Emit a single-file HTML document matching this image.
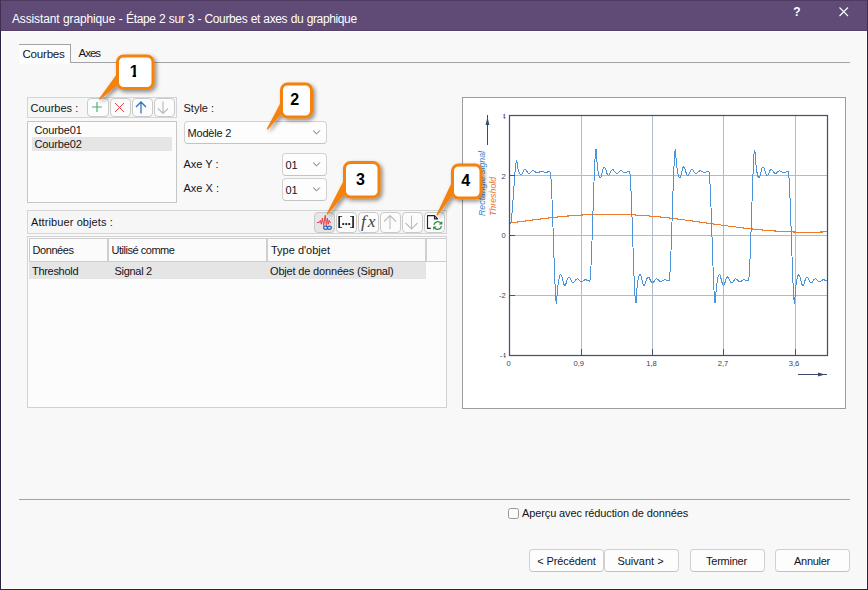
<!DOCTYPE html>
<html lang="fr">
<head>
<meta charset="utf-8">
<title>Assistant graphique</title>
<style>
html,body{margin:0;padding:0}
body{width:868px;height:590px;position:relative;overflow:hidden;background:#f8f8f8;font-family:"Liberation Sans",sans-serif;font-size:11px;color:#141420}
.a{position:absolute;box-sizing:border-box}
.t{position:absolute;white-space:nowrap;font-size:11px;line-height:14px}
.tb{border:1px solid #d5d5d5;background:#f6f6f6}
.btn{position:absolute;box-sizing:border-box;border:1px solid #cacaca;border-radius:4px;background:#fcfcfc}
.cb{position:absolute;box-sizing:border-box;border:1px solid #d2d2d2;border-bottom-color:#c4c4c4;border-radius:4px;background:#fdfdfd}
.pb{position:absolute;box-sizing:border-box;border:1px solid #d0d0d0;border-bottom-color:#c2c2c2;border-radius:4px;background:#fdfdfd;height:23px;top:549px;text-align:center;line-height:23px;font-size:11px}
svg{position:absolute;left:0;top:0;overflow:visible}
</style>
</head>
<body>
<!-- title bar -->
<div class="a" style="left:0;top:0;width:868px;height:31px;background:#604b76;border-bottom:1px solid #574069"></div>
<div class="t" style="left:12px;top:11px;font-size:12px;line-height:16px;color:#fff;letter-spacing:-0.37px;word-spacing:0.45px"><span style="letter-spacing:-0.14px">Assistant graphique -</span> Étape 2 sur 3 - Courbes et axes du graphique</div>
<div class="t" style="left:793.3px;top:4px;font-size:12px;line-height:16px;color:#fff;font-weight:bold">?</div>
<svg width="868" height="32"><path d="M839.5 7.5 L848 16 M848 7.5 L839.5 16" stroke="#fff" stroke-width="1.1" fill="none"/></svg>
<div class="a" style="left:0;top:0;width:868px;height:1px;background:#4d3b62"></div>
<!-- inner highlight -->
<div class="a" style="left:1px;top:31px;width:866px;height:558px;border:1px solid #fff"></div>
<!-- window borders -->
<div class="a" style="left:0;top:0;width:1px;height:31px;background:#3f3052"></div>
<div class="a" style="left:867px;top:0;width:1px;height:31px;background:#3f3052"></div>
<div class="a" style="left:0;top:31px;width:1px;height:559px;background:#2c2040"></div>
<div class="a" style="left:867px;top:31px;width:1px;height:559px;background:#2c2040"></div>
<div class="a" style="left:0;top:589px;width:868px;height:1px;background:#2c2040"></div>

<!-- tabs -->
<div class="a" style="left:70px;top:62px;width:780px;height:1px;background:#a3a3a3"></div>
<div class="a" style="left:19px;top:44px;width:51px;height:20px;background:#fdfdfd;border-top:1px solid #a3a3a3"></div>
<div class="a" style="left:70px;top:44px;width:1px;height:19px;background:#a3a3a3"></div>
<div class="t" style="left:22.5px;top:46px;font-size:11.6px;line-height:16px;letter-spacing:-0.25px">Courbes</div>
<div class="t" style="left:78.5px;top:45px;font-size:11.5px;line-height:16px;letter-spacing:-1.0px">Axes</div>

<!-- toolbar 1 -->
<div class="a tb" style="left:27px;top:97px;width:150px;height:21px"></div>
<div class="t" style="left:30.5px;top:101px">Courbes :</div>
<div class="btn" style="left:87px;top:98px;width:22px;height:19px"></div>
<div class="btn" style="left:110px;top:98px;width:21px;height:19px"></div>
<div class="btn" style="left:132px;top:98px;width:21px;height:19px"></div>
<div class="btn" style="left:154px;top:98px;width:21px;height:19px"></div>
<svg width="868" height="590">
 <path d="M92 107 H102 M97 102 V112" stroke="#4cae72" stroke-width="1.15" fill="none"/>
 <path d="M115 103 L124 112 M124 103 L115 112" stroke="#e5434b" stroke-width="1" fill="none"/>
 <path d="M141 113.5 V102 M136 107 L141 102 L146 107" stroke="#2a72c0" stroke-width="1.25" fill="none"/>
 <path d="M163 101.5 V113.5 M158 108.5 L163 113.5 L168 108.5" stroke="#bcbcbc" stroke-width="1.2" fill="none"/>
</svg>

<!-- listbox -->
<div class="a" style="left:27px;top:121px;width:150px;height:82px;border:1px solid #c6c6c6;background:#fcfcfc"></div>
<div class="a" style="left:32px;top:137px;width:140px;height:14px;background:#e5e5e5"></div>
<div class="t" style="left:34.5px;top:123px;letter-spacing:-0.15px">Courbe01</div>
<div class="t" style="left:34.5px;top:137px;letter-spacing:-0.15px">Courbe02</div>

<!-- style / axes -->
<div class="t" style="left:183.5px;top:101px">Style :</div>
<div class="cb" style="left:184px;top:121px;width:143px;height:23px"></div>
<div class="t" style="left:187.5px;top:126px;letter-spacing:-0.2px">Modèle 2</div>
<div class="t" style="left:183.5px;top:157px">Axe Y :</div>
<div class="cb" style="left:282px;top:153px;width:45px;height:23px"></div>
<div class="t" style="left:285.5px;top:158px">01</div>
<div class="t" style="left:183.5px;top:181px">Axe X :</div>
<div class="cb" style="left:282px;top:178px;width:45px;height:23px"></div>
<div class="t" style="left:285.5px;top:183px">01</div>
<svg width="868" height="590">
 <path d="M313.2 130.6 L316.5 133.9 L319.8 130.6" stroke="#666" stroke-width="1" fill="none"/>
 <path d="M313.2 162.6 L316.5 165.9 L319.8 162.6" stroke="#666" stroke-width="1" fill="none"/>
 <path d="M313.2 187.6 L316.5 190.9 L319.8 187.6" stroke="#666" stroke-width="1" fill="none"/>
</svg>

<!-- toolbar 2 -->
<div class="a tb" style="left:27px;top:210px;width:420px;height:24px"></div>
<div class="t" style="left:31px;top:215px;letter-spacing:0.1px">Attribuer objets :</div>
<div class="btn" style="left:314px;top:212px;width:21px;height:21px;background:#e6e6e6;border-color:#c9c9c9"></div>
<div class="btn" style="left:336px;top:212px;width:21px;height:21px"></div>
<div class="btn" style="left:358px;top:212px;width:21px;height:21px"></div>
<div class="btn" style="left:380px;top:212px;width:21px;height:21px"></div>
<div class="btn" style="left:402px;top:212px;width:21px;height:21px"></div>
<div class="btn" style="left:424px;top:212px;width:21px;height:21px"></div>
<div class="t" style="left:336.8px;top:213px;font-size:13px;line-height:16px;color:#111;transform:scaleX(1.45);transform-origin:0 0">[</div>
<div class="t" style="left:349.6px;top:213px;font-size:13px;line-height:16px;color:#111;transform:scaleX(1.45);transform-origin:0 0">]</div>
<div class="t" style="left:341.6px;top:213px;font-size:12px;line-height:16px;color:#111;font-weight:bold;letter-spacing:-0.33px">...</div>
<div class="t" style="left:361px;top:210.5px;font-family:'Liberation Serif',serif;font-style:italic;font-size:17.5px;line-height:20px;color:#444;letter-spacing:1.8px">fx</div>
<svg width="868" height="590">
 <!-- waveform -->
 <path d="M317 222.5 L319.2 222.5 L320.4 220.4 L321.3 224.2 L322.4 218 L323.7 225.6 L325.2 215.3 L326.4 225.6 L327.4 218 L328.3 224.2 L329.2 220.4 L330 222.5 L330.8 222.5" stroke="#e63e4a" stroke-width="1" fill="none" stroke-linejoin="round"/>
 <!-- chain link -->
 <ellipse cx="325.6" cy="227.7" rx="2.0" ry="1.6" stroke="#2b62b8" stroke-width="1.25" fill="none"/>
 <ellipse cx="329.4" cy="227.7" rx="2.0" ry="1.6" stroke="#2b62b8" stroke-width="1.25" fill="none"/>
 <!-- arrows disabled -->
 <path d="M390 229 V215.5 M384 221.5 L390 215.5 L396 221.5" stroke="#bdbdbd" stroke-width="1.1" fill="none"/>
 <path d="M411.5 215.5 V229 M405.5 223 L411.5 229 L417.5 223" stroke="#bdbdbd" stroke-width="1.1" fill="none"/>
 <!-- doc -->
 <path d="M430.8 228.4 H427.5 V215.6 H434.5 L437.6 218.9 H434.5 V215.6" stroke="#222" stroke-width="1.1" fill="none" stroke-linejoin="round"/>
 <path d="M433.9 224.8 A3.9 3.9 0 0 1 440.7 223" stroke="#2e8f49" stroke-width="1.3" fill="none"/>
 <path d="M441.5 226.2 A3.9 3.9 0 0 1 434.7 228" stroke="#2e8f49" stroke-width="1.3" fill="none"/>
 <path d="M442.3 221 V224.6 H438.7 Z" fill="#2e8f49"/>
 <path d="M433.1 230 V226.4 H436.7 Z" fill="#2e8f49"/>
</svg>

<!-- table -->
<div class="a" style="left:27px;top:236px;width:420px;height:172px;border:1px solid #d2d2d2;background:#fcfcfc"></div>
<div class="a" style="left:29px;top:238px;width:417px;height:24px;background:#fbfbfb;border:1px solid #cdcdcd;border-right:none"></div>
<div class="a" style="left:107px;top:239px;width:2px;height:22px;background:#cfcfcf"></div>
<div class="a" style="left:266px;top:239px;width:2px;height:22px;background:#cfcfcf"></div>
<div class="a" style="left:425px;top:239px;width:2px;height:22px;background:#cfcfcf"></div>
<div class="a" style="left:29px;top:262px;width:397px;height:17px;background:#e5e5e5"></div>
<div class="t" style="left:32.5px;top:243px;letter-spacing:-0.42px">Données</div>
<div class="t" style="left:111.5px;top:243px;letter-spacing:-0.47px">Utilisé comme</div>
<div class="t" style="left:271px;top:243px">Type d'objet</div>
<div class="t" style="left:32px;top:264px;letter-spacing:-0.3px">Threshold</div>
<div class="t" style="left:114.5px;top:264px;letter-spacing:-0.3px">Signal 2</div>
<div class="t" style="left:270px;top:264px;letter-spacing:-0.17px">Objet de données (Signal)</div>

<!-- preview -->
<div class="a" style="left:462px;top:97px;width:384px;height:312px;border:1px solid #9c9c9c;background:#fff"></div>
<svg width="868" height="590" font-family="Liberation Sans, sans-serif">
 <defs><clipPath id="pc"><rect x="509" y="115" width="319" height="241"/></clipPath><clipPath id="c4a"><rect x="503.2" y="110" width="6" height="12"/></clipPath><clipPath id="c4b"><rect x="503.6" y="349" width="6" height="12"/></clipPath></defs>
 <!-- grid -->
 <g stroke="#afbcd0" stroke-width="1" fill="none" shape-rendering="crispEdges">
  <path d="M581.5 116 V355 M652.5 116 V355 M723.5 116 V355 M795.5 116 V355"/>
  <path d="M510 175.5 H828 M510 235.5 H828 M510 295.5 H828"/>
 </g>
 <g clip-path="url(#pc)" fill="none" shape-rendering="crispEdges">
  <polyline points="509.5,223.2 512.5,222.8 515.5,222.3 518.5,221.9 521.5,221.5 524.5,221.1 527.5,220.7 530.5,220.3 533.5,219.9 536.5,219.5 539.5,219.1 542.5,218.7 545.5,218.3 548.5,218.0 551.5,217.7 554.5,217.3 557.5,217.0 560.5,216.7 563.5,216.4 566.5,216.1 569.5,215.9 572.5,215.6 575.5,215.4 578.5,215.2 581.5,215.0 584.5,214.9 587.5,214.7 590.5,214.6 593.5,214.5 596.5,214.4 599.5,214.3 602.5,214.2 605.5,214.2 608.5,214.2 611.5,214.2 614.5,214.2 617.5,214.3 620.5,214.4 623.5,214.4 626.5,214.6 629.5,214.7 632.5,214.8 635.5,215.0 638.5,215.2 641.5,215.4 644.5,215.6 647.5,215.8 650.5,216.1 653.5,216.4 656.5,216.6 659.5,216.9 662.5,217.3 665.5,217.6 668.5,217.9 671.5,218.3 674.5,218.6 677.5,219.0 680.5,219.4 683.5,219.8 686.5,220.2 689.5,220.6 692.5,221.0 695.5,221.4 698.5,221.8 701.5,222.3 704.5,222.7 707.5,223.1 710.5,223.5 713.5,224.0 716.5,224.4 719.5,224.8 722.5,225.2 725.5,225.6 728.5,226.1 731.5,226.5 734.5,226.8 737.5,227.2 740.5,227.6 743.5,228.0 746.5,228.3 749.5,228.7 752.5,229.0 755.5,229.3 758.5,229.6 761.5,229.9 764.5,230.2 767.5,230.5 770.5,230.7 773.5,230.9 776.5,231.1 779.5,231.3 782.5,231.5 785.5,231.7 788.5,231.8 791.5,231.9 794.5,232.0 797.5,232.1 800.5,232.1 803.5,232.2 806.5,232.2 809.5,232.2 812.5,232.2 815.5,232.1 818.5,232.1 821.5,232.0 824.5,231.9 827.5,231.7" stroke="#ee7a2c" stroke-width="1.1"/>
  <polyline points="509.5,224.1 510.0,224.1 510.5,223.9 511.0,222.1 511.5,218.4 512.0,213.4 512.5,207.2 513.0,200.4 513.5,193.1 514.0,185.8 514.5,178.9 515.0,172.6 515.5,167.3 516.0,163.3 516.5,161.1 517.0,162.5 517.5,166.3 518.0,168.9 518.5,170.8 519.0,172.2 519.5,173.3 520.0,174.1 520.5,174.6 521.0,174.7 521.5,174.5 522.0,173.8 522.5,173.0 523.0,172.0 523.5,171.0 524.0,170.2 524.5,169.7 525.0,169.5 525.5,169.7 526.0,170.2 526.5,170.8 527.0,171.6 527.5,172.4 528.0,173.0 528.5,173.5 529.0,173.6 529.5,173.6 530.0,173.3 530.5,172.8 531.0,172.3 531.5,171.7 532.0,171.2 532.5,170.9 533.0,170.7 533.5,170.7 534.0,170.9 534.5,171.2 535.0,171.5 535.5,171.9 536.0,172.3 536.5,172.5 537.0,172.7 537.5,172.7 538.0,172.6 538.5,172.4 539.0,172.2 539.5,172.0 540.0,171.7 540.5,171.5 541.0,171.4 541.5,171.4 542.0,171.4 542.5,171.5 543.0,171.6 543.5,171.8 544.0,172.0 544.5,172.1 545.0,172.2 545.5,172.2 546.0,172.2 546.5,172.2 547.0,172.1 547.5,172.0 548.0,171.9 548.5,171.8 549.0,171.7 549.5,171.7 550.0,171.7 550.5,173.1 551.0,178.6 551.5,187.5 552.0,199.1 552.5,212.6 553.0,227.4 553.5,242.6 554.0,257.6 554.5,271.6 555.0,283.9 555.5,293.9 556.0,300.7 556.5,303.7 557.0,296.5 557.5,289.6 558.0,284.9 558.5,281.4 559.0,278.8 559.5,276.8 560.0,275.3 560.5,274.6 561.0,274.8 561.5,275.7 562.0,277.2 562.5,279.2 563.0,281.3 563.5,283.2 564.0,284.6 564.5,285.4 565.0,285.4 565.5,284.8 566.0,283.6 566.5,282.0 567.0,280.4 567.5,278.9 568.0,277.7 568.5,277.1 569.0,276.9 569.5,277.3 570.0,278.0 570.5,279.1 571.0,280.2 571.5,281.3 572.0,282.2 572.5,282.8 573.0,283.0 573.5,282.8 574.0,282.3 574.5,281.7 575.0,280.9 575.5,280.2 576.0,279.5 576.5,279.1 577.0,278.9 577.5,278.9 578.0,279.2 578.5,279.6 579.0,280.1 579.5,280.6 580.0,281.0 580.5,281.4 581.0,281.6 581.5,281.6 582.0,281.4 582.5,281.2 583.0,280.9 583.5,280.5 584.0,280.2 584.5,280.0 585.0,279.8 585.5,279.8 586.0,279.8 586.5,280.0 587.0,280.2 587.5,280.4 588.0,280.6 588.5,280.8 589.0,280.9 589.5,281.0 590.0,279.8 590.5,274.7 591.0,266.0 591.5,254.6 592.0,241.2 592.5,226.5 593.0,211.2 593.5,196.2 594.0,182.0 594.5,169.5 595.0,159.3 595.5,152.1 596.0,148.8 596.5,155.1 597.0,162.2 597.5,167.2 598.0,170.8 598.5,173.5 599.0,175.6 599.5,177.0 600.0,177.7 600.5,177.7 601.0,176.8 601.5,175.3 602.0,173.3 602.5,171.2 603.0,169.3 603.5,167.9 604.0,167.0 604.5,167.0 605.0,167.6 605.5,168.7 606.0,170.3 606.5,171.9 607.0,173.4 607.5,174.6 608.0,175.3 608.5,175.5 609.0,175.2 609.5,174.4 610.0,173.4 610.5,172.2 611.0,171.1 611.5,170.3 612.0,169.7 612.5,169.4 613.0,169.6 613.5,170.0 614.0,170.7 614.5,171.4 615.0,172.2 615.5,172.8 616.0,173.3 616.5,173.5 617.0,173.5 617.5,173.3 618.0,172.9 618.5,172.4 619.0,171.8 619.5,171.4 620.0,171.0 620.5,170.9 621.0,170.8 621.5,170.9 622.0,171.2 622.5,171.5 623.0,171.8 623.5,172.2 624.0,172.4 624.5,172.6 625.0,172.6 625.5,172.6 626.0,172.4 626.5,172.2 627.0,172.0 627.5,171.8 628.0,171.6 628.5,171.5 629.0,171.4 629.5,171.5 630.0,174.2 630.5,180.9 631.0,190.7 631.5,203.0 632.0,217.0 632.5,232.0 633.0,247.3 633.5,262.1 634.0,275.6 634.5,287.3 635.0,296.3 635.5,302.0 636.0,302.8 636.5,294.1 637.0,287.9 637.5,283.6 638.0,280.4 638.5,278.0 639.0,276.2 639.5,275.0 640.0,274.6 640.5,275.0 641.0,276.1 641.5,277.8 642.0,279.9 642.5,281.9 643.0,283.7 643.5,284.9 644.0,285.5 644.5,285.3 645.0,284.4 645.5,283.1 646.0,281.5 646.5,279.9 647.0,278.5 647.5,277.5 648.0,277.0 648.5,277.0 649.0,277.5 649.5,278.4 650.0,279.5 650.5,280.6 651.0,281.6 651.5,282.4 652.0,282.9 652.5,282.9 653.0,282.7 653.5,282.1 654.0,281.4 654.5,280.7 655.0,279.9 655.5,279.4 656.0,279.0 656.5,278.9 657.0,279.0 657.5,279.3 658.0,279.7 658.5,280.2 659.0,280.7 659.5,281.2 660.0,281.4 660.5,281.6 661.0,281.5 661.5,281.4 662.0,281.1 662.5,280.8 663.0,280.4 663.5,280.1 664.0,279.9 664.5,279.8 665.0,279.8 665.5,279.9 666.0,280.0 666.5,280.3 667.0,280.5 667.5,280.7 668.0,280.8 668.5,280.9 669.0,281.0 669.5,278.7 670.0,272.4 670.5,262.9 671.0,250.8 671.5,236.9 672.0,221.9 672.5,206.6 673.0,191.8 673.5,178.0 674.0,166.1 674.5,156.8 675.0,150.7 675.5,148.6 676.0,157.5 676.5,163.9 677.0,168.4 677.5,171.7 678.0,174.2 678.5,176.1 679.0,177.3 679.5,177.8 680.0,177.5 680.5,176.4 681.0,174.8 681.5,172.7 682.0,170.6 682.5,168.8 683.0,167.5 683.5,166.9 684.0,167.1 684.5,167.9 685.0,169.2 685.5,170.8 686.0,172.4 686.5,173.8 687.0,174.9 687.5,175.4 688.0,175.5 688.5,175.0 689.0,174.1 689.5,173.0 690.0,171.9 690.5,170.9 691.0,170.0 691.5,169.6 692.0,169.4 692.5,169.7 693.0,170.2 693.5,170.9 694.0,171.7 694.5,172.4 695.0,173.0 695.5,173.4 696.0,173.5 696.5,173.5 697.0,173.2 697.5,172.7 698.0,172.2 698.5,171.7 699.0,171.3 699.5,171.0 700.0,170.8 700.5,170.8 701.0,171.0 701.5,171.3 702.0,171.6 702.5,171.9 703.0,172.2 703.5,172.5 704.0,172.6 704.5,172.6 705.0,172.5 705.5,172.4 706.0,172.2 706.5,171.9 707.0,171.7 707.5,171.6 708.0,171.5 708.5,171.4 709.0,171.8 709.5,175.8 710.0,183.5 710.5,194.2 711.0,207.1 711.5,221.5 712.0,236.6 712.5,251.8 713.0,266.3 713.5,279.4 714.0,290.3 714.5,298.4 715.0,303.0 715.5,299.9 716.0,292.0 716.5,286.5 717.0,282.6 717.5,279.7 718.0,277.4 718.5,275.8 719.0,274.8 719.5,274.6 720.0,275.3 720.5,276.6 721.0,278.4 721.5,280.5 722.0,282.5 722.5,284.1 723.0,285.2 723.5,285.5 724.0,285.1 724.5,284.1 725.0,282.6 725.5,281.0 726.0,279.4 726.5,278.1 727.0,277.3 727.5,276.9 728.0,277.1 728.5,277.7 729.0,278.7 729.5,279.8 730.0,280.9 730.5,281.9 731.0,282.6 731.5,282.9 732.0,282.9 732.5,282.5 733.0,281.9 733.5,281.2 734.0,280.4 734.5,279.7 735.0,279.2 735.5,278.9 736.0,278.9 736.5,279.1 737.0,279.4 737.5,279.9 738.0,280.4 738.5,280.9 739.0,281.3 739.5,281.5 740.0,281.6 740.5,281.5 741.0,281.3 741.5,281.0 742.0,280.7 742.5,280.3 743.0,280.1 743.5,279.9 744.0,279.8 744.5,279.8 745.0,279.9 745.5,280.1 746.0,280.3 746.5,280.5 747.0,280.7 747.5,280.9 748.0,281.0 748.5,280.8 749.0,277.2 749.5,269.9 750.0,259.5 750.5,246.8 751.0,232.5 751.5,217.3 752.0,202.1 752.5,187.5 753.0,174.2 753.5,163.0 754.0,154.6 754.5,149.6 755.0,151.5 755.5,159.7 756.0,165.4 756.5,169.5 757.0,172.5 757.5,174.8 758.0,176.5 758.5,177.5 759.0,177.8 759.5,177.3 760.0,176.0 760.5,174.2 761.0,172.1 761.5,170.1 762.0,168.4 762.5,167.3 763.0,166.9 763.5,167.2 764.0,168.2 764.5,169.6 765.0,171.3 765.5,172.8 766.0,174.2 766.5,175.1 767.0,175.5 767.5,175.4 768.0,174.8 768.5,173.8 769.0,172.7 769.5,171.6 770.0,170.6 770.5,169.9 771.0,169.5 771.5,169.5 772.0,169.8 772.5,170.4 773.0,171.1 773.5,171.9 774.0,172.6 774.5,173.1 775.0,173.5 775.5,173.5 776.0,173.4 776.5,173.0 777.0,172.6 777.5,172.1 778.0,171.6 778.5,171.2 779.0,170.9 779.5,170.8 780.0,170.9 780.5,171.1 781.0,171.4 781.5,171.7 782.0,172.0 782.5,172.3 783.0,172.5 783.5,172.6 784.0,172.6 784.5,172.5 785.0,172.3 785.5,172.1 786.0,171.9 786.5,171.7 787.0,171.5 787.5,171.4 788.0,171.4 788.5,172.6 789.0,177.8 789.5,186.4 790.0,197.9 790.5,211.3 791.0,226.0 791.5,241.2 792.0,256.3 792.5,270.4 793.0,282.9 793.5,293.1 794.0,300.2 794.5,303.6 795.0,297.3 795.5,290.1 796.0,285.2 796.5,281.6 797.0,278.9 797.5,276.9 798.0,275.4 798.5,274.7 799.0,274.7 799.5,275.6 800.0,277.1 800.5,279.1 801.0,281.1 801.5,283.1 802.0,284.5 802.5,285.3 803.0,285.4 803.5,284.8 804.0,283.7 804.5,282.1 805.0,280.5 805.5,279.0 806.0,277.8 806.5,277.1 807.0,276.9 807.5,277.2 808.0,278.0 808.5,279.0 809.0,280.2 809.5,281.2 810.0,282.1 810.5,282.7 811.0,282.9 811.5,282.8 812.0,282.4 812.5,281.7 813.0,281.0 813.5,280.2 814.0,279.6 814.5,279.1 815.0,278.9 815.5,278.9 816.0,279.1 816.5,279.5 817.0,280.0 817.5,280.5 818.0,281.0 818.5,281.3 819.0,281.5 819.5,281.6 820.0,281.5 820.5,281.2 821.0,280.9 821.5,280.6 822.0,280.3 822.5,280.0 823.0,279.8 823.5,279.8 824.0,279.8 824.5,280.0 825.0,280.2 825.5,280.4 826.0,280.6 826.5,280.8 827.0,280.9 827.5,281.0" stroke="#4b93da" stroke-width="1"/>
 </g>
 <rect x="509.5" y="115.5" width="318" height="240" fill="none" stroke="#42526f" stroke-width="1.25"/>
 <g stroke="#42526f" stroke-width="1.1" shape-rendering="crispEdges">
  <path d="M581.5 349 V355 M652.5 349 V355 M723.5 349 V355 M795.5 349 V355"/>
  <path d="M510 175.5 H515 M510 235.5 H515 M510 295.5 H515"/>
 </g>
 <g font-size="7.6" fill="#33425f" text-anchor="end">
  <text x="505.8" y="118.8" clip-path="url(#c4a)">4</text>
  <text x="505.8" y="178.8">2</text>
  <text x="505.8" y="238.2">0</text>
  <text x="505.8" y="298.2">-2</text>
  <text x="502.2" y="357.6">-</text>
  <text x="506" y="357.6" clip-path="url(#c4b)">4</text>
 </g>
 <g font-size="7.6" fill="#33425f" text-anchor="middle">
  <text x="508.7" y="365.6">0</text>
  <text x="578.8" y="365.6">0,9</text>
  <text x="651.5" y="365.6">1,8</text>
  <text x="723" y="365.6">2,7</text>
  <text x="794" y="365.6">3,6</text>
 </g>
 <!-- axis arrows -->
 <path d="M487.5 115 V145" stroke="#3a4a6b" stroke-width="1"/>
 <path d="M487.5 117 L489.4 125 H485.6 Z" fill="#3a4a6b"/>
 <path d="M798 374.5 H827" stroke="#3a4a6b" stroke-width="1"/>
 <path d="M825 374.5 L818 372.6 V376.4 Z" fill="#3a4a6b"/>
 <text transform="translate(485.3,216) rotate(-90)" font-size="8.8" font-style="italic" fill="#3d85d0">Rectangle signal</text>
 <text transform="translate(496,216) rotate(-90)" font-size="8.8" font-style="italic" fill="#e8742a">Threshold</text>
</svg>

<!-- bottom -->
<div class="a" style="left:19px;top:499px;width:831px;height:1px;background:#a3a3a3"></div>
<div class="a" style="left:508px;top:508px;width:11px;height:11px;border:1px solid #979797;border-radius:2.5px;background:#fbfbfb"></div>
<div class="t" style="left:522px;top:506px;letter-spacing:-0.12px">Aperçu avec réduction de données</div>
<div class="pb" style="left:529px;width:75px;letter-spacing:-0.1px">&lt; Précédent</div>
<div class="pb" style="left:604px;width:75px;padding-right:2px">Suivant &gt;</div>
<div class="pb" style="left:690px;width:75px;letter-spacing:-0.25px;padding-right:2px">Terminer</div>
<div class="pb" style="left:775px;width:75px;letter-spacing:-0.3px;padding-right:1px">Annuler</div>

<!-- callouts -->
<svg width="868" height="590" font-family="Liberation Sans, sans-serif">
 <defs>
  <filter id="sh" x="-30%" y="-30%" width="170%" height="170%">
   <feGaussianBlur in="SourceAlpha" stdDeviation="2"/>
   <feOffset dx="2" dy="2"/>
   <feComponentTransfer><feFuncA type="linear" slope="0.45"/></feComponentTransfer>
   <feMerge><feMergeNode/><feMergeNode in="SourceGraphic"/></feMerge>
  </filter>
 </defs>
 <g filter="url(#sh)">
  <path d="M117.5 74.5 L99.8 99 L117.5 84.5 Z" fill="#f5820c" stroke="#f5820c" stroke-width="1.5" stroke-linejoin="round"/>
  <rect x="117.5" y="56" width="35.5" height="32.5" rx="6" fill="#fff" stroke="#f5820c" stroke-width="3"/>
 </g>
 <text x="134.1" y="76.5" font-size="16" font-weight="bold" text-anchor="middle" fill="#000">1</text>
 <rect x="128" y="74.8" width="4.6" height="3" fill="#fff"/><rect x="136.1" y="74.8" width="4" height="3" fill="#fff"/>
 <g filter="url(#sh)">
  <path d="M281.5 102.5 L267.6 128.8 L281.5 112.5 Z" fill="#f5820c" stroke="#f5820c" stroke-width="1.5" stroke-linejoin="round"/>
  <rect x="281.5" y="84" width="30" height="33" rx="6" fill="#fff" stroke="#f5820c" stroke-width="3"/>
 </g>
 <text x="294.7" y="104.8" font-size="16" font-weight="bold" text-anchor="middle" fill="#000">2</text>
 <g filter="url(#sh)">
  <path d="M344.5 180.5 L327.4 213.8 L344.5 193 Z" fill="#f5820c" stroke="#f5820c" stroke-width="1.5" stroke-linejoin="round"/>
  <rect x="344.5" y="162.5" width="34.5" height="34.5" rx="6" fill="#fff" stroke="#f5820c" stroke-width="3"/>
 </g>
 <text x="360.5" y="185" font-size="16" font-weight="bold" text-anchor="middle" fill="#000">3</text>
 <g filter="url(#sh)">
  <path d="M452.5 182.5 L437.3 214.9 L452.5 194 Z" fill="#f5820c" stroke="#f5820c" stroke-width="1.5" stroke-linejoin="round"/>
  <rect x="452.5" y="165" width="28.5" height="33" rx="6" fill="#fff" stroke="#f5820c" stroke-width="3"/>
 </g>
 <text x="465.7" y="185.8" font-size="16" font-weight="bold" text-anchor="middle" fill="#000">4</text>
</svg>
</body>
</html>
